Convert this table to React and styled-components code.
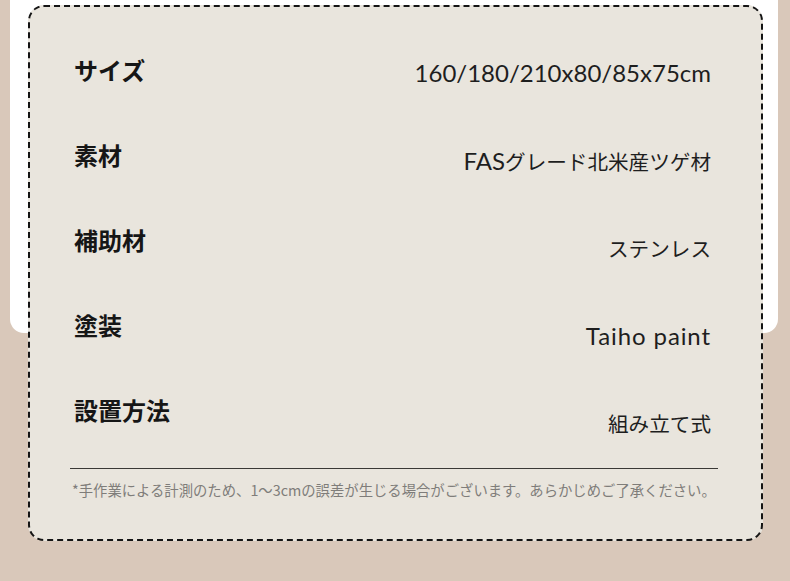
import styled, { createGlobalStyle } from "styled-components";

const GlobalStyle = createGlobalStyle`
  html, body {
    margin: 0;
    padding: 0;
    background: #d9c8ba;
  }
  body {
    font-family: "Noto Sans CJK JP", "Noto Sans", sans-serif;
  }
`;

const Stage = styled.div`
  position: relative;
  width: 790px;
  height: 581px;
  padding: 5px 27px 0 28px;
  box-sizing: border-box;
  overflow: hidden;

  /* white panel sitting behind the spec card */
  &::before {
    content: "";
    position: absolute;
    left: 10px;
    right: 12px;
    top: -20px;
    height: 353px;
    background: #ffffff;
    border-radius: 0 0 14px 14px;
  }
`;

const Card = styled.div`
  position: relative;
  width: 735px;
  box-sizing: border-box;
  border: 2px dashed #141414;
  border-radius: 16px;
  background: #e9e5dd;
  padding: 51px 43px 39px 40px;
`;

const Specs = styled.div`
  display: flex;
  justify-content: space-between;
  padding: 0 7px 0 4px;
`;

const LabelCol = styled.div`
  display: flex;
  flex-direction: column;
  gap: 61px;
`;

const ValueCol = styled.div`
  display: flex;
  flex-direction: column;
  align-items: flex-end;
  gap: 63.5px;
  padding-top: 3px;
`;

const Label = styled.div`
  font-family: "Noto Sans CJK JP", sans-serif;
  font-weight: 700;
  font-size: 24px;
  line-height: 24px;
  color: #161616;
`;

const Value = styled.div`
  font-family: "Noto Sans CJK JP", sans-serif;
  font-size: 20.6px;
  line-height: 24px;
  color: #1e1e1e;
  white-space: nowrap;
`;

const Latin = styled.span`
  font-family: "Lato", sans-serif;
  font-size: 24px;
  letter-spacing: ${(p) => (p.$wide ? "0.9px" : "0")};
`;

const Rule = styled.hr`
  margin: 33px 0 0;
  border: none;
  border-top: 1px solid #3a3835;
`;

const Note = styled.p`
  margin: 11px 0 0 2px;
  font-family: "Noto Sans CJK JP", sans-serif;
  font-size: 14.35px;
  line-height: 20px;
  color: #7f7d7a;
  white-space: nowrap;
`;

const specs = [
  ["サイズ", <Latin>160/180/210x80/85x75cm</Latin>],
  ["素材", <><Latin>FAS</Latin>グレード北米産ツゲ材</>],
  ["補助材", "ステンレス"],
  ["塗装", <Latin $wide>Taiho paint</Latin>],
  ["設置方法", "組み立て式"],
];

export default function App() {
  return (
    <>
      <GlobalStyle />
      <Stage>
        <Card>
          <Specs>
            <LabelCol>
              {specs.map(([label]) => (
                <Label key={label}>{label}</Label>
              ))}
            </LabelCol>
            <ValueCol>
              {specs.map(([label, value]) => (
                <Value key={label}>{value}</Value>
              ))}
            </ValueCol>
          </Specs>
          <Rule />
          <Note>
            *手作業による計測のため、1〜3cmの誤差が生じる場合がございます。あらかじめご了承ください。
          </Note>
        </Card>
      </Stage>
    </>
  );
}
